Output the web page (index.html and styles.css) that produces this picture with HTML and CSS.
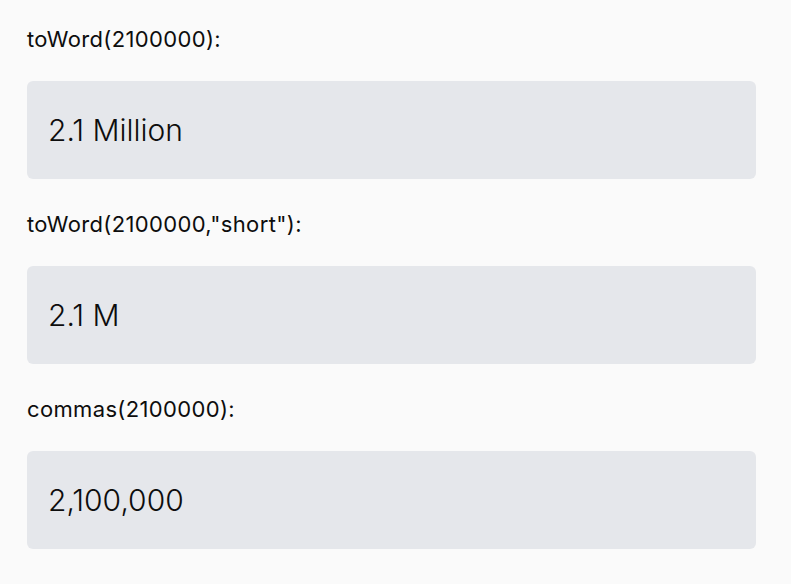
FILE: index.html
```html
<!DOCTYPE html>
<html>
<head>
<meta charset="utf-8">
<link rel="stylesheet" href="styles.css">
</head>
<body>
<main class="page">
  <section class="item">
    <div class="label">toWord(2100000):</div>
    <div class="output">2.1 Million</div>
  </section>
  <section class="item">
    <div class="label">toWord(2100000,"short"):</div>
    <div class="output">2.1 M</div>
  </section>
  <section class="item">
    <div class="label">commas(2100000):</div>
    <div class="output">2,100,000</div>
  </section>
</main>
</body>
</html>
```
FILE: styles.css
```css
html, body {
  margin: 0;
  padding: 0;
  background: #fafafa;
}
body {
  font-family: Inter, "Noto Sans", sans-serif;
  color: #0d0d0d;
}
.page {
  display: flex;
  flex-direction: column;
  gap: 30px;
  padding: 24px 35px 0 27px;
}
.item {
  display: flex;
  flex-direction: column;
  gap: 27px;
}
.label {
  font-size: 22px;
  line-height: 30px;
  font-weight: 400;
  letter-spacing: 0.35px;
}
.output {
  background: #e5e7eb;
  border-radius: 6px;
  padding: 31px 21px;
  font-size: 30px;
  line-height: 36px;
  font-weight: 300;
}
```
